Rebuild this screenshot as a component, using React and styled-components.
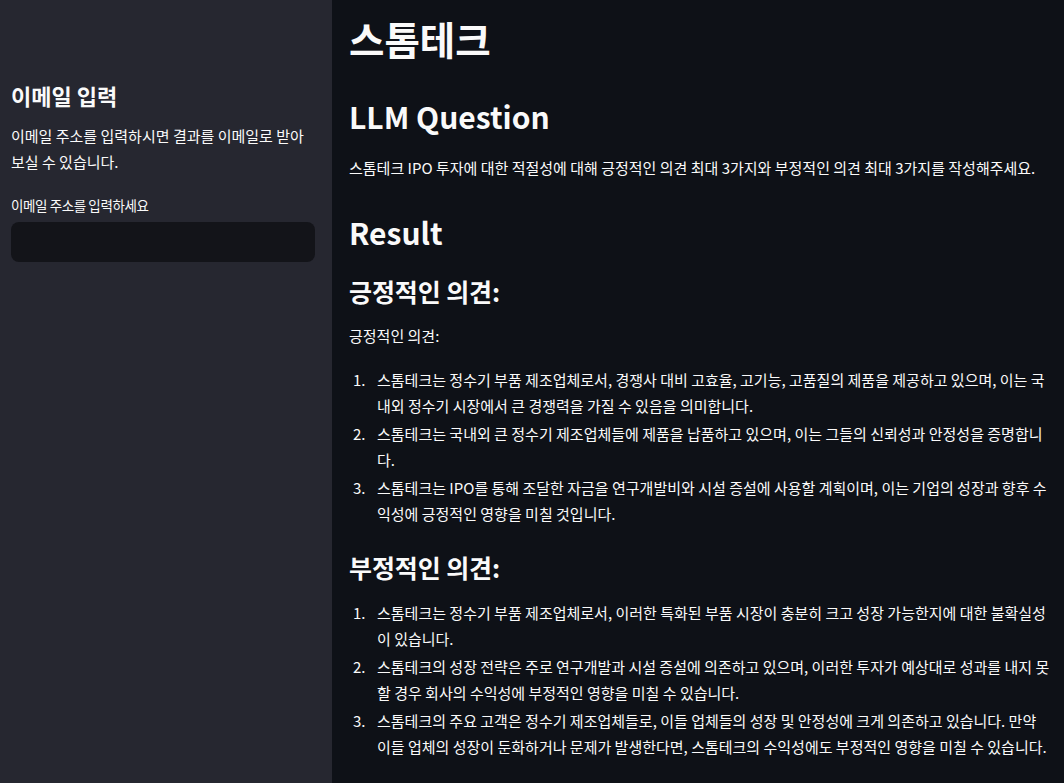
import React from "react";
import styled, { createGlobalStyle } from "styled-components";

const GlobalStyle = createGlobalStyle`
  html, body {
    margin: 0;
    padding: 0;
    background: #0e1117;
  }
  body {
    font-family: "Noto Sans CJK KR", "Noto Sans", sans-serif;
    color: #fafafa;
  }
  * { box-sizing: border-box; }
`;

const Page = styled.div`
  display: flex;
  width: 1064px;
  height: 783px;
  overflow: hidden;
  background: #0e1117;
`;

const Sidebar = styled.aside`
  width: 332px;
  flex: 0 0 332px;
  background: #262730;
  padding: 79px 17px 0 11px;
  display: flex;
  flex-direction: column;
`;

const SideHeading = styled.h2`
  margin: 0;
  font-size: 22px;
  line-height: 32px;
  font-weight: 700;
`;

const SideText = styled.p`
  margin: 12px 0 0;
  font-size: 15px;
  line-height: 26px;
`;

const Label = styled.label`
  display: block;
  margin-top: 20px;
  font-size: 13.5px;
  line-height: 20px;
  letter-spacing: -0.4px;
`;

const Input = styled.input`
  display: block;
  margin-top: 7px;
  width: 100%;
  height: 40px;
  border: none;
  outline: none;
  border-radius: 8px;
  background: #131419;
  color: #fafafa;
  padding: 0 12px;
  font: inherit;
`;

const Main = styled.main`
  flex: 1;
  padding: 14px 14px 0 17px;
  display: flex;
  flex-direction: column;
`;

const Title = styled.h1`
  margin: 0;
  font-size: 38.5px;
  line-height: 48px;
  font-weight: 700;
`;

const Header = styled.h2`
  margin: ${(p) => p.$mt}px 0 0;
  font-size: 30px;
  line-height: 44px;
  font-weight: 700;
`;

const SubHeader = styled.h3`
  margin: ${(p) => p.$mt}px 0 0;
  font-size: 25px;
  line-height: 36px;
  font-weight: 700;
  letter-spacing: -0.1px;
`;

const Para = styled.p`
  margin: ${(p) => p.$mt}px 0 0;
  font-size: 15px;
  line-height: 26px;
`;

const List = styled.ol`
  margin: ${(p) => p.$mt}px 0 0;
  padding: 0;
  list-style: none;
  display: flex;
  flex-direction: column;
  gap: 2px;
`;

const Item = styled.li`
  display: flex;
  font-size: 15px;
  line-height: 26px;
`;

const Num = styled.span`
  flex: 0 0 28px;
  padding-left: 4px;
`;

const ItemText = styled.span`
  flex: 1;
`;

const positives = [
  "스톰테크는 정수기 부품 제조업체로서, 경쟁사 대비 고효율, 고기능, 고품질의 제품을 제공하고 있으며, 이는 국내외 정수기 시장에서 큰 경쟁력을 가질 수 있음을 의미합니다.",
  "스톰테크는 국내외 큰 정수기 제조업체들에 제품을 납품하고 있으며, 이는 그들의 신뢰성과 안정성을 증명합니다.",
  "스톰테크는 IPO를 통해 조달한 자금을 연구개발비와 시설 증설에 사용할 계획이며, 이는 기업의 성장과 향후 수익성에 긍정적인 영향을 미칠 것입니다.",
];

const negatives = [
  "스톰테크는 정수기 부품 제조업체로서, 이러한 특화된 부품 시장이 충분히 크고 성장 가능한지에 대한 불확실성이 있습니다.",
  "스톰테크의 성장 전략은 주로 연구개발과 시설 증설에 의존하고 있으며, 이러한 투자가 예상대로 성과를 내지 못할 경우 회사의 수익성에 부정적인 영향을 미칠 수 있습니다.",
  "스톰테크의 주요 고객은 정수기 제조업체들로, 이들 업체들의 성장 및 안정성에 크게 의존하고 있습니다. 만약 이들 업체의 성장이 둔화하거나 문제가 발생한다면, 스톰테크의 수익성에도 부정적인 영향을 미칠 수 있습니다.",
];

function NumberedList({ items, mt }) {
  return (
    <List $mt={mt}>
      {items.map((t, i) => (
        <Item key={i}>
          <Num>{i + 1}.</Num>
          <ItemText>{t}</ItemText>
        </Item>
      ))}
    </List>
  );
}

export default function App() {
  return (
    <>
      <GlobalStyle />
      <Page>
        <Sidebar>
          <SideHeading>이메일 입력</SideHeading>
          <SideText>이메일 주소를 입력하시면 결과를 이메일로 받아 보실 수 있습니다.</SideText>
          <Label htmlFor="email">이메일 주소를 입력하세요</Label>
          <Input id="email" type="text" />
        </Sidebar>
        <Main>
          <Title>스톰테크</Title>
          <Header $mt={32}>LLM Question</Header>
          <Para $mt={17}>
            스톰테크 IPO 투자에 대한 적절성에 대해 긍정적인 의견 최대 3가지와 부정적인 의견 최대 3가지를 작성해주세요.
          </Para>
          <Header $mt={29}>Result</Header>
          <SubHeader $mt={19}>긍정적인 의견:</SubHeader>
          <Para $mt={14}>긍정적인 의견:</Para>
          <NumberedList items={positives} mt={18} />
          <SubHeader $mt={22}>부정적인 의견:</SubHeader>
          <NumberedList items={negatives} mt={15} />
        </Main>
      </Page>
    </>
  );
}
